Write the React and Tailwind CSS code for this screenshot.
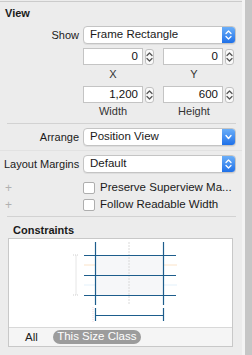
import React from "react";

function UpDown({ color = "white", w = 12, h = 18 }) {
  const cx = w / 2;
  const cy = h / 2;
  return (
    <svg width={w} height={h} viewBox={`0 0 ${w} ${h}`}>
      <path d={`M${cx - 2.5} ${cy - 1.5} L${cx} ${cy - 4} L${cx + 2.5} ${cy - 1.5}`} fill="none" stroke={color} strokeWidth="1.3" strokeLinecap="round" strokeLinejoin="round" />
      <path d={`M${cx - 2.5} ${cy + 1.5} L${cx} ${cy + 4} L${cx + 2.5} ${cy + 1.5}`} fill="none" stroke={color} strokeWidth="1.3" strokeLinecap="round" strokeLinejoin="round" />
    </svg>
  );
}

function Down() {
  return (
    <svg width="13" height="18" viewBox="0 0 13 18">
      <path d="M4 7.5 L6.5 10.5 L9 7.5" fill="none" stroke="white" strokeWidth="1.4" strokeLinecap="round" strokeLinejoin="round" />
    </svg>
  );
}

function Popup({ text, single }) {
  return (
    <div className="w-[153px] h-[18px] flex rounded-[4px] border border-[#c4c4c4] bg-white shadow-[0_1px_0_rgba(0,0,0,0.06)] overflow-hidden">
      <div className="flex-1 pl-[6px] flex items-center text-[11.5px] text-[#1a1a1a] leading-none">{text}</div>
      <div className="w-[13px] h-full bg-gradient-to-b from-[#6aaef8] to-[#1e70e8] flex items-center justify-center">
        {single ? <Down /> : <UpDown w={13} h={16} />}
      </div>
    </div>
  );
}

function Stepper() {
  return (
    <div className="w-[9px] h-[16px] rounded-[3px] border border-[#c2c2c2] bg-[#fafafa] flex items-center justify-center">
      <UpDown color="#555" w={7} h={14} />
    </div>
  );
}

function Field({ value }) {
  return (
    <div className="flex items-center gap-[2px]">
      <div className="w-[60px] h-[17px] border border-[#c4c4c4] bg-white flex items-center justify-end pr-[4px] text-[11.5px] text-[#111] leading-none">{value}</div>
      <Stepper />
    </div>
  );
}

function Checkbox({ label }) {
  return (
    <div className="flex items-center h-[12px]">
      <div className="w-[79px] pl-[5px] text-[#b0b0b0] text-[12px] leading-none">+</div>
      <div className="ml-[4px] w-[12px] h-[12px] rounded-[2px] border border-[#aeaeae] bg-white" />
      <div className="ml-[5px] text-[11.5px] text-[#1a1a1a] whitespace-nowrap leading-none">{label}</div>
    </div>
  );
}

export default function App() {
  return (
    <div className="w-[252px] h-[355px] bg-[#ececec] flex overflow-hidden font-['Liberation_Sans',Arial,sans-serif] text-[11px] leading-[13px] text-[#1a1a1a]">
      <div className="w-[242px] flex flex-col">
        <div className="h-px mt-px bg-[#cbcbcb]" />
        <div className="mt-[5px] pl-[5px] font-bold h-[13px]">View</div>

        <div className="mt-[6px] flex items-center h-[18px]">
          <div className="w-[79px] text-right">Show</div>
          <div className="ml-[4px]"><Popup text="Frame Rectangle" /></div>
        </div>

        <div className="mt-[4px] flex h-[17px] pl-[83px] gap-[9px]">
          <Field value="0" />
          <Field value="0" />
        </div>
        <div className="mt-[3px] flex h-[13px] pl-[83px] text-[#333]">
          <div className="w-[60px] text-center">X</div>
          <div className="w-[60px] ml-[21px] text-center">Y</div>
        </div>

        <div className="mt-[5px] flex h-[17px] pl-[83px] gap-[9px]">
          <Field value="1,200" />
          <Field value="600" />
        </div>
        <div className="mt-[2px] flex h-[13px] pl-[83px] text-[#333]">
          <div className="w-[60px] text-center">Width</div>
          <div className="w-[60px] ml-[21px] text-center">Height</div>
        </div>

        <div className="mt-[5px] h-px ml-[7px] w-[229px] bg-[#d2d2d2]" />

        <div className="mt-[4px] flex items-center h-[18px]">
          <div className="w-[79px] text-right">Arrange</div>
          <div className="ml-[4px]"><Popup text="Position View" single /></div>
        </div>

        <div className="mt-[4px] h-px bg-[#e2e2e2]" />

        <div className="mt-[4px] flex items-center h-[18px]">
          <div className="w-[79px] text-right pl-[4px] whitespace-nowrap">Layout Margins</div>
          <div className="ml-[4px]"><Popup text="Default" /></div>
        </div>

        <div className="mt-[9px]"><Checkbox label="Preserve Superview Ma..." /></div>
        <div className="mt-[5px]"><Checkbox label="Follow Readable Width" /></div>

        <div className="mt-[5px] h-px ml-[7px] w-[229px] bg-[#d2d2d2]" />

        <div className="mt-[7px] pl-[13px] font-bold h-[13px]">Constraints</div>

        <div className="mt-px ml-[8px] w-[225px] h-[109px] border border-[#c8c8c8] bg-white flex flex-col">
          <svg width="223" height="88" viewBox="0 0 223 88" className="block">
            <rect x="86" y="16" width="68" height="40" fill="#f6f7f9" />
            <line x1="120" y1="3" x2="120" y2="66" stroke="#dadada" strokeWidth="1" strokeDasharray="2 1" />
            <line x1="75" y1="26" x2="86" y2="26" stroke="#fbe3c8" strokeWidth="1" />
            <line x1="154" y1="26" x2="168" y2="26" stroke="#fbe3c8" strokeWidth="1" />
            <line x1="75" y1="46" x2="86" y2="46" stroke="#e3f1fb" strokeWidth="1" />
            <line x1="154" y1="46" x2="168" y2="46" stroke="#e3f1fb" strokeWidth="1" />
            <line x1="67" y1="16" x2="67" y2="56" stroke="#e6e6e6" strokeWidth="1" />
            <line x1="64" y1="16" x2="70" y2="16" stroke="#cfcfcf" strokeWidth="1" strokeDasharray="1 1" />
            <line x1="64" y1="56" x2="70" y2="56" stroke="#cfcfcf" strokeWidth="1" strokeDasharray="1 1" />
            <line x1="86.5" y1="3" x2="86.5" y2="66" stroke="#1d5d8c" strokeWidth="1.2" />
            <line x1="154.5" y1="3" x2="154.5" y2="66" stroke="#1d5d8c" strokeWidth="1.2" />
            <line x1="75" y1="16.5" x2="167" y2="16.5" stroke="#1d5d8c" strokeWidth="1.2" />
            <line x1="75" y1="36.5" x2="167" y2="36.5" stroke="#1d5d8c" strokeWidth="1.2" />
            <line x1="75" y1="56.5" x2="167" y2="56.5" stroke="#1d5d8c" strokeWidth="1.2" />
            <line x1="86.5" y1="76.5" x2="154.5" y2="76.5" stroke="#1d5d8c" strokeWidth="1.2" />
            <line x1="86.5" y1="69" x2="86.5" y2="82" stroke="#1d5d8c" strokeWidth="1.2" />
            <line x1="154.5" y1="69" x2="154.5" y2="82" stroke="#1d5d8c" strokeWidth="1.2" />
            <line x1="84" y1="68" x2="84" y2="84" stroke="#f6d6dc" strokeWidth="1" strokeDasharray="1 1" />
          </svg>
          <div className="flex-1 border-t border-[#d8d8d8] bg-[#f5f5f5] flex items-center">
            <div className="ml-[16px] text-[11.5px] text-[#222]">All</div>
            <div className="ml-[15px] h-[14px] w-[88px] rounded-full bg-[#9c9c9c] text-white text-[11.5px] leading-none flex items-center justify-center whitespace-nowrap">This Size Class</div>
          </div>
        </div>
      </div>
      <div className="w-[3px] h-full bg-[#f4f4f4]" />
      <div className="w-[7px] h-full bg-[#c6c6c6]" />
    </div>
  );
}
